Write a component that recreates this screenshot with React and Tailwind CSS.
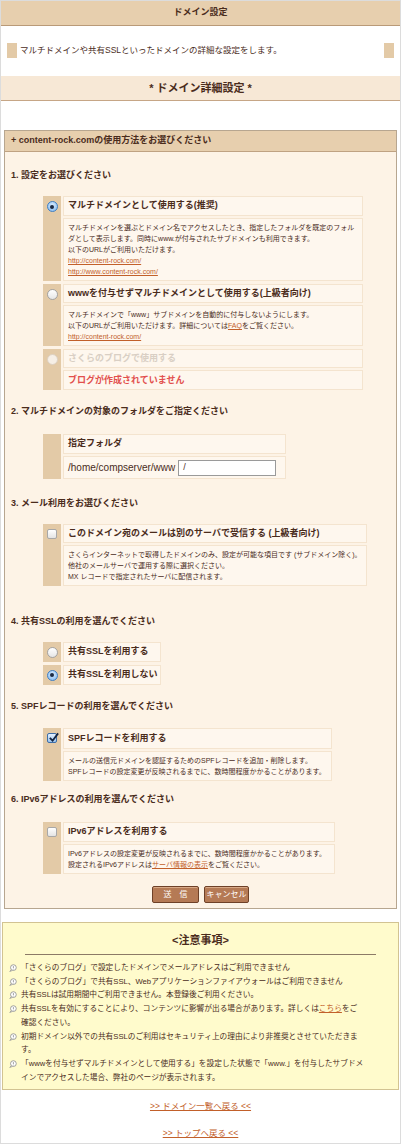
import React from 'react';

const Radio = ({ checked, disabled }) => (
  <span
    className={`inline-flex items-center justify-center w-[11px] h-[11px] rounded-full border ${
      checked
        ? 'border-[#3f7fc4] bg-[radial-gradient(circle_at_50%_35%,#d8ecff,#7fb6ee)]'
        : disabled
        ? 'border-[#ddd0c0] bg-[#f6efe6]'
        : 'border-[#a3a3a3] bg-[linear-gradient(#ffffff,#e6e6e6)]'
    }`}
  >
    {checked && <span className="block w-[4px] h-[4px] rounded-full bg-[#1b2a44]" />}
  </span>
);

const Check = ({ checked }) => (
  <span
    className={`relative inline-block w-[10px] h-[10px] rounded-[2px] border ${
      checked ? 'border-[#3d6ea8] bg-[linear-gradient(#e3f0ff,#9cc4ee)]' : 'border-[#a8a8a8] bg-[linear-gradient(#ffffff,#e4e4e4)]'
    }`}
  >
    {checked && (
      <svg viewBox="0 0 12 12" className="absolute left-[0px] top-[-2px] w-[11px] h-[11px]">
        <path d="M2 6.5 L5 9.5 L11 1.5" fill="none" stroke="#13233f" strokeWidth="2" />
      </svg>
    )}
  </span>
);

const Cell = ({ className = '', children }) => (
  <div className={`bg-[#fef7ee] border border-[#f4e4cf] ${className}`}>{children}</div>
);

const A = ({ children }) => <span className="text-[#c2602a] underline">{children}</span>;

// one option block: tan side column + title row + optional description row
const Option = ({ control, title, titleClass = '', desc, width, titleH = 'h-[20px]' }) => (
  <div className={`flex gap-[2px] ${width}`}>
    <div className="w-[18px] shrink-0 bg-[#e3caa7] flex justify-center pt-[5px]">{control}</div>
    <div className="flex-1 flex flex-col gap-[2px]">
      <Cell className={`${titleH} flex items-center pl-[4px] text-[9px] font-bold whitespace-nowrap ${titleClass}`}>{title}</Cell>
      {desc && <Cell className="px-[4px] py-[3px] text-[7px] leading-[11px] whitespace-nowrap">{desc}</Cell>}
    </div>
  </div>
);

const Heading = ({ children, className = '' }) => (
  <div className={`pl-[6px] text-[9px] font-bold leading-[12px] ${className}`}>{children}</div>
);

const QIcon = () => (
  <svg viewBox="0 0 10 10" className="block w-[8px] h-[8px] mt-[3px]">
    <circle cx="5.5" cy="4.5" r="3.6" fill="#fff" stroke="#8a8a8a" strokeWidth="1" />
    <path d="M3 7 L1 9.3 L4.2 8" fill="#fff" stroke="#8a8a8a" strokeWidth="0.9" />
    <path d="M5.5 2.6 V5" stroke="#8a8a8a" strokeWidth="1" />
    <circle cx="5.5" cy="6.3" r="0.6" fill="#8a8a8a" />
  </svg>
);

const notices = [
  <>「さくらのブログ」で設定したドメインでメールアドレスはご利用できません</>,
  <>「さくらのブログ」で共有SSL、Webアプリケーションファイアウォールはご利用できません</>,
  <>共有SSLは試用期間中ご利用できません。本登録後ご利用ください。</>,
  <>共有SSLを有効にすることにより、コンテンツに影響が出る場合があります。詳しくは<A>こちら</A>をご<br />確認ください。</>,
  <>初期ドメイン以外での共有SSLのご利用はセキュリティ上の理由により非推奨とさせていただきま<br />す。</>,
  <>「wwwを付与せずマルチドメインとして使用する」を設定した状態で「www.」を付与したサブドメ<br />インでアクセスした場合、弊社のページが表示されます。</>,
];

export default function App() {
  return (
    <div className="w-[401px] min-h-[1144px] bg-white border border-[#dcdcdc] text-[#4a2c1c] font-['Liberation_Sans','Noto_Sans_CJK_JP',sans-serif]">
      {/* page title */}
      <div className="h-[25px] bg-[#e7cfae] border-b border-[#b99a78] flex items-center justify-center text-[9px] font-bold">
        ドメイン設定
      </div>

      {/* intro */}
      <div className="mt-[17px] px-[6px] flex items-center h-[15px]">
        <div className="w-[10px] h-[15px] bg-[#e3caa7]" />
        <div className="flex-1 pl-[3px] text-[8.5px]">マルチドメインや共有SSLといったドメインの詳細な設定をします。</div>
        <div className="w-[10px] h-[15px] bg-[#e3caa7]" />
      </div>

      {/* section band */}
      <div className="mt-[18px] h-[25px] bg-[#f7e8d6] border-b border-[#c6a686] flex items-center justify-center text-[11px] font-bold">
        * ドメイン詳細設定 *
      </div>

      {/* main form box */}
      <div className="mt-[29px] mx-[3px] border border-[#b7a690] bg-[#fdf3e6]">
        <div className="h-[21px] bg-[#e7cfae] border-b border-[#bfa282] flex items-center pl-[6px] text-[9px] font-bold">
          + content-rock.comの使用方法をお選びください
        </div>

        <Heading className="mt-[17px]">1. 設定をお選びください</Heading>
        <div className="mt-[15px] ml-[38px] flex flex-col gap-[3px]">
          <Option
            width="w-[320px]"
            control={<Radio checked />}
            title="マルチドメインとして使用する(推奨)"
            desc={
              <>
                マルチドメインを選ぶとドメイン名でアクセスしたとき、指定したフォルダを既定のフォル
                <br />ダとして表示します。同時にwww.が付与されたサブドメインも利用できます。
                <br />以下のURLがご利用いただけます。
                <br /><A>http://content-rock.com/</A>
                <br /><A>http://www.content-rock.com/</A>
              </>
            }
          />
          <Option
            width="w-[320px]"
            titleH="h-[19px]"
            control={<Radio />}
            title="wwwを付与せずマルチドメインとして使用する(上級者向け)"
            desc={
              <>
                マルチドメインで「www」サブドメインを自動的に付与しないようにします。
                <br />以下のURLがご利用いただけます。詳細については<A>FAQ</A>をご覧ください。
                <br /><A>http://content-rock.com/</A>
              </>
            }
          />
          <Option
            width="w-[320px]"
            titleH="h-[19px]"
            control={<Radio disabled />}
            title="さくらのブログで使用する"
            titleClass="text-[#d9cfc4]"
            desc={<span className="block text-[9px] font-bold text-[#e2504d] leading-[12px]">ブログが作成されていません</span>}
          />
        </div>

        <Heading className="mt-[15px]">2. マルチドメインの対象のフォルダをご指定ください</Heading>
        <div className="mt-[17px] ml-[38px] w-[243px] flex gap-[2px]">
          <div className="w-[18px] shrink-0 bg-[#e3caa7]" />
          <div className="flex-1 flex flex-col gap-[2px]">
            <Cell className="h-[20px] flex items-center pl-[4px] text-[9px] font-bold">指定フォルダ</Cell>
            <Cell className="h-[23px] flex items-center pl-[4px] text-[10px]">
              /home/compserver/www
              <span className="ml-[3px] w-[98px] h-[16px] bg-white border border-[#9a9a9a] flex items-center pl-[4px] text-[9px]">/</span>
            </Cell>
          </div>
        </div>

        <Heading className="mt-[18px]">3. メール利用をお選びください</Heading>
        <div className="mt-[15px] ml-[38px]">
          <Option
            width="w-[319px]"
            titleH="h-[19px]"
            control={<Check />}
            title="このドメイン宛のメールは別のサーバで受信する (上級者向け)"
            desc={
              <>
                さくらインターネットで取得したドメインのみ、設定が可能な項目です (サブドメイン除く)。
                <br />他社のメールサーバで運用する際に選択ください。
                <br />MX レコードで指定されたサーバに配信されます。
              </>
            }
          />
        </div>

        <Heading className="mt-[29px]">4. 共有SSLの利用を選んでください</Heading>
        <div className="mt-[15px] ml-[38px] w-[118px] flex flex-col gap-[3px]">
          {[['共有SSLを利用する', false], ['共有SSLを利用しない', true]].map(([t, c]) => (
            <div key={t} className="flex gap-[2px] h-[20px]">
              <div className="w-[18px] shrink-0 bg-[#e3caa7] flex items-center justify-center"><Radio checked={c} /></div>
              <Cell className="flex-1 flex items-center pl-[4px] text-[9px] font-bold">{t}</Cell>
            </div>
          ))}
        </div>

        <Heading className="mt-[15px]">5. SPFレコードの利用を選んでください</Heading>
        <div className="mt-[16px] ml-[38px]">
          <Option
            width="w-[289px]"
            titleH="h-[21px]"
            control={<Check checked />}
            title="SPFレコードを利用する"
            desc={
              <>
                メールの送信元ドメインを認証するためのSPFレコードを追加・削除します。
                <br />SPFレコードの設定変更が反映されるまでに、数時間程度かかることがあります。
              </>
            }
          />
        </div>

        <Heading className="mt-[12px]">6. IPv6アドレスの利用を選んでください</Heading>
        <div className="mt-[17px] ml-[38px]">
          <Option
            width="w-[292px]"
            control={<Check />}
            title="IPv6アドレスを利用する"
            desc={
              <>
                IPv6アドレスの設定変更が反映されるまでに、数時間程度かかることがあります。
                <br />設定されるIPv6アドレスは<A>サーバ情報の表示</A>をご覧ください。
              </>
            }
          />
        </div>

        <div className="mt-[12px] mb-[5px] flex justify-center gap-[5px]">
          <button className="w-[47px] h-[17px] bg-[#b57a55] border border-[#6e4128] rounded-[2px] text-white text-[8px] shadow-[inset_0_1px_0_#d9a987]">
            送　信
          </button>
          <button className="w-[45px] h-[17px] bg-[#b57a55] border border-[#6e4128] rounded-[2px] text-white text-[8px] shadow-[inset_0_1px_0_#d9a987]">
            キャンセル
          </button>
        </div>
      </div>

      {/* notices */}
      <div className="mt-[13px] mx-[1px] bg-[#fffbcc] border border-[#d2c392] px-[6px] pt-[10px] pb-[5px]">
        <div className="text-center text-[11px] font-bold leading-[14px]">&lt;注意事項&gt;</div>
        <div className="mx-[16px] mt-[7px] border-t border-[#8c7a66]" />
        <div className="mt-[6px] text-[7.7px] leading-[13.7px]">
          {notices.map((n, i) => (
            <div key={i} className="flex">
              <div className="w-[12px] shrink-0"><QIcon /></div>
              <div className="whitespace-nowrap">{n}</div>
            </div>
          ))}
        </div>
      </div>

      {/* back links */}
      <div className="mt-[9px] flex flex-col items-center gap-[13px] text-[8.5px] leading-[14px] text-[#c2602a]">
        <span className="underline">&gt;&gt; ドメイン一覧へ戻る &lt;&lt;</span>
        <span className="underline">&gt;&gt; トップへ戻る &lt;&lt;</span>
      </div>
    </div>
  );
}
